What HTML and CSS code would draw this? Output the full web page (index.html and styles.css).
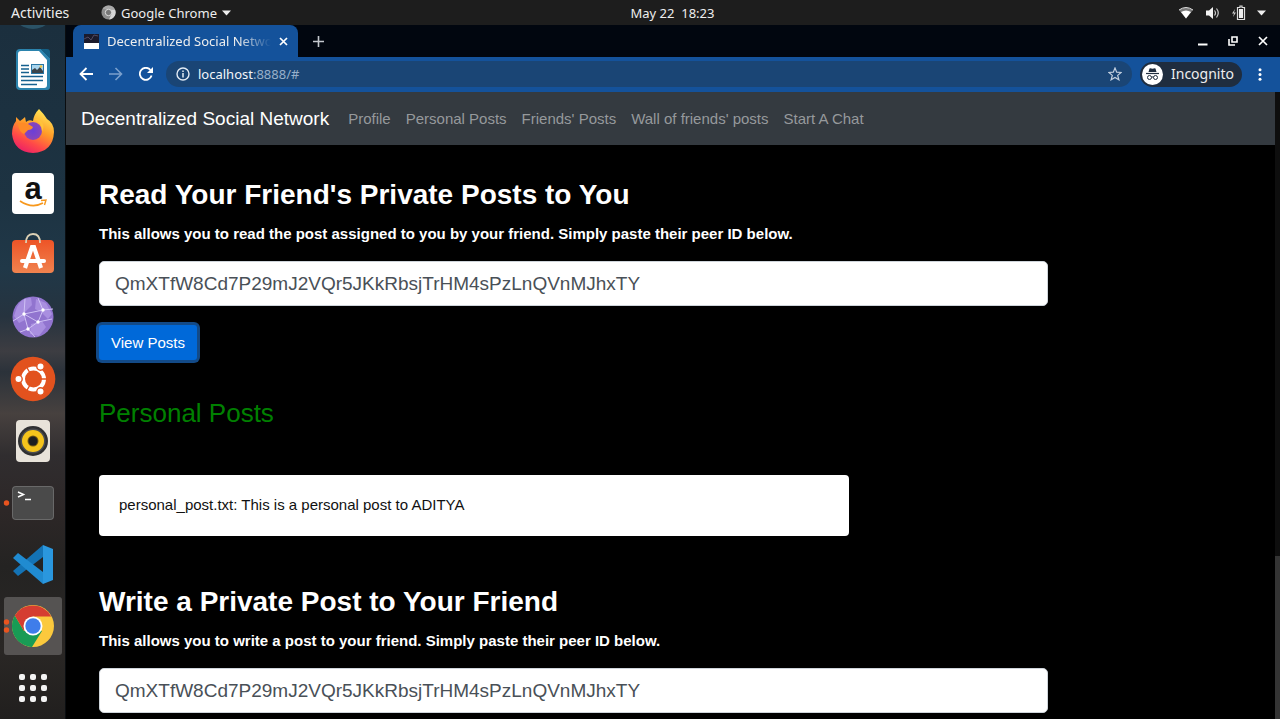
FILE: index.html
```html
<!DOCTYPE html>
<html lang="en">
<head>
<meta charset="utf-8">
<title>Decentralized Social Network</title>
<link rel="stylesheet" href="styles.css">
</head>
<body>
<div class="desktop">
  <header class="topbar">
    <button class="top-btn activities" type="button">Activities</button>
    <button class="top-btn app-menu" type="button">
      <svg width="15" height="15" viewBox="0 0 15 15"><circle cx="7.500" cy="7.500" r="7" fill="#8d8d8d"/><path d="M7.500 4.500H14A7 7 0 0 1 8 14.500L10.500 9Z" fill="#d5d5d5"/><path d="M1.500 4A7 7 0 0 1 14 4.500H7.500Z" fill="#a9a9a9"/><circle cx="7.500" cy="7.500" r="3.200" fill="#777" stroke="#ddd" stroke-width="1"/></svg>
      <span>Google Chrome</span>
      <svg width="9" height="6" viewBox="0 0 9 6"><path d="M0 0.500H9L4.500 5.500Z" fill="#eee"/></svg>
    </button>
    <time class="clock">May 22&nbsp; 18:23</time>
    <div class="tray">
      <svg width="16" height="14" viewBox="0 0 16 14"><path d="M1 4Q8 -1 15 4L8 12.500Z" fill="#777"/><path d="M3 6Q8 3 13 6L8 12.500Z" fill="#fff"/><path d="M1 4Q8 -1 15 4" fill="none" stroke="#ddd" stroke-width="1"/></svg>
      <svg width="15" height="14" viewBox="0 0 15 14"><path d="M1 4.500H4L8 1V13L4 9.500H1Z" fill="#f2f2f2"/><path d="M9.500 4.500Q11.500 7 9.500 9.500M11.500 2.500Q15 7 11.500 11.500" fill="none" stroke="#ccc" stroke-width="1.200"/></svg>
      <svg width="15" height="16" viewBox="0 0 15 16"><path d="M4 4L1 8.500H3L2 12L5 7.500H3Z" fill="#ccc"/><path d="M6.500 2.500H9V1H11V2.500H13.500V14.500H6.500Z" fill="none" stroke="#ddd" stroke-width="1.200"/><path d="M8 4H12V13H8Z" fill="#eee"/></svg>
      <svg width="9" height="6" viewBox="0 0 9 6"><path d="M0 0.500H9L4.500 5.500Z" fill="#eee"/></svg>
    </div>
  </header>

  <nav class="launcher" aria-label="Launcher">
    <a class="dock" href="#" aria-label="Mail"><svg viewBox="0 0 66 62"><circle cx="33" cy="32" r="22" fill="#2b5266"/></svg></a>
    <a class="dock" href="#" aria-label="Writer"><svg viewBox="0 0 66 62">
      <path d="M20 12H41L50 21V50Q50 53 47 53H20Q16 53 16 49V16Q16 12 20 12Z" fill="#2b83ad"/><path d="M41 12H47Q50 12 50 15V21Z" fill="#135f85"/><path d="M21 14H39L47 23V48Q47 51 44 51H21Q18 51 18 48V17Q18 14 21 14Z" fill="#fff"/>
      <path d="M21 28.500H29M21 32H29M21 35.500H29M21 39.500H43M21 43.500H43M21 47.500H37" stroke="#15618f" stroke-width="1.500"/><path d="M31 27H44V37H31Z" fill="#2a76a4"/><path d="M32 28H43V36H32Z" fill="#a9d5ee"/><path d="M32 36V33L35 31L37 33L40 30L43 34V36Z" fill="#3b444a"/><circle cx="41" cy="29.500" r="1.300" fill="#f8c63c"/></svg></a>
    <a class="dock" href="#" aria-label="Firefox"><svg viewBox="0 0 66 62">
      <defs><linearGradient id="fx" x1=".8" y1="0" x2=".3" y2="1"><stop offset="0" stop-color="#fff05a"/><stop offset=".45" stop-color="#ff9a27"/><stop offset=".75" stop-color="#ff4a48"/><stop offset="1" stop-color="#ec2067"/></linearGradient><radialGradient id="fp"><stop offset="0" stop-color="#6a3fd8"/><stop offset="1" stop-color="#8a45b8"/></radialGradient></defs>
      <path d="M39 10Q44 15 47 20Q54 24 54 33Q53 53 33 54Q14 53 12 35Q12 27 16 22V18L20 22Q23 20 25 18L26 23Q29 20 33 22Q34 15 39 10Z" fill="url(#fx)"/><circle cx="33" cy="32" r="9" fill="url(#fp)"/><path d="M18 25Q24 22 28 25L33 28Q32 31 28 31L24 35Q19 33 18 25Z" fill="#ff8b27"/><path d="M34 20Q42 23 42 33Q46 25 39 20Z" fill="#ffc23a"/></svg></a>
    <a class="dock" href="#" aria-label="Amazon"><svg viewBox="0 0 66 62"><rect x="12" y="12" width="42" height="41" rx="4" fill="#fff"/><text class="amazon" x="33" y="38" text-anchor="middle">a</text><path d="M20 40Q32 48 43 42" fill="none" stroke="#f7981d" stroke-width="1.600"/><path d="M41 39.500L46 39L44.500 44" fill="none" stroke="#f7981d" stroke-width="1.400"/></svg></a>
    <a class="dock" href="#" aria-label="Software"><svg viewBox="0 0 66 62"><defs><linearGradient id="sw" x2="0" y2="1"><stop stop-color="#ed5427"/><stop offset="1" stop-color="#f0834f"/></linearGradient></defs><rect x="12" y="17" width="42" height="33" rx="4" fill="url(#sw)"/><path d="M26 20Q26 11 33 11Q40 11 40 20" fill="none" stroke="#ddd1b5" stroke-width="1.800"/><path d="M25 45L32 24H34L41 45" fill="none" stroke="#fff" stroke-width="4.200"/><path d="M22 38H44" stroke="#fff" stroke-width="4" stroke-linecap="round"/></svg></a>
    <a class="dock" href="#" aria-label="Browser"><svg viewBox="0 0 66 62"><circle cx="33" cy="32" r="20.500" fill="#9174cf"/><path d="M17 22Q22 12 31 13L32 20L24 28L25 35L19 38L14 31ZM36 14L46 18L52 29L48 34L41 27L35 24ZM31 39L42 36L46 42L39 51L30 49Z" fill="#a98fe0"/><path d="M13 36L24 29L38 37L43 25L53 24M24 29L28 44L38 37L52 34M24 29L43 25L38 13M28 44L20 47M24 29L25 14M28 44L35 52" fill="none" stroke="#cfc1f4" stroke-width="1"/><g fill="#fff"><circle cx="24" cy="29" r="1.700"/><circle cx="43" cy="25" r="1.700"/><circle cx="38" cy="37" r="1.700"/><circle cx="28" cy="44" r="1.700"/></g></svg></a>
    <a class="dock" href="#" aria-label="Ubuntu"><svg viewBox="0 0 66 62"><circle cx="33" cy="32" r="22.300" fill="#e2521e"/><circle cx="33.500" cy="32" r="10.500" fill="none" stroke="#fff" stroke-width="4"/><path d="M41 32H48M30 26L26 19M30 38L26 45" stroke="#e2521e" stroke-width="1.400"/><g fill="#fff" stroke="#e2521e" stroke-width="1.400"><circle cx="18.500" cy="32" r="3.700"/><circle cx="40.500" cy="19.500" r="3.700"/><circle cx="40.500" cy="44.500" r="3.700"/></g></svg></a>
    <a class="dock" href="#" aria-label="Rhythmbox"><svg viewBox="0 0 66 62"><rect x="16" y="11" width="34" height="42" rx="4" fill="#e8e3da"/><circle cx="33" cy="32" r="15" fill="#2f3032"/><circle cx="33" cy="32" r="12.500" fill="#4b4d50"/><circle cx="33" cy="32" r="11" fill="#f5c41c"/><circle cx="33" cy="32" r="5.500" fill="#745a12"/><circle cx="33" cy="32" r="4.500" fill="#1d1e20"/></svg></a>
    <a class="dock" href="#" aria-label="Terminal"><svg viewBox="0 0 66 62"><circle cx="6.500" cy="32" r="2.700" fill="#e9541f"/><rect x="12" y="15" width="42" height="34" rx="4" fill="#696969"/><rect x="13" y="16" width="40" height="32" rx="3" fill="#4a4a4a"/><path d="M18 21L23.500 23.500L18 26M25 28.500H31" fill="none" stroke="#fff" stroke-width="1.500"/></svg></a>
    <a class="dock" href="#" aria-label="Visual Studio Code"><svg viewBox="0 0 66 62"><path d="M43 24V12L13 38L18 43Z" fill="#1473b5"/><path d="M13 25L18 20L43 39V51Z" fill="#208bd1"/><path d="M43 12L53 16V47L43 51Z" fill="#2a97de"/></svg></a>
    <a class="dock active" href="#" aria-label="Google Chrome"><svg viewBox="0 0 66 62"><rect x="4" y="2" width="58" height="58" rx="3" fill="#5e5c5a" fill-opacity=".85"/><circle cx="6.500" cy="27" r="2.700" fill="#e9541f"/><circle cx="6.500" cy="35" r="2.700" fill="#e9541f"/><circle cx="33" cy="31" r="21" fill="#fbc93d"/><path d="M14.800 20.500A21 21 0 0 0 32 52L42 36L33 31L24 36Z" fill="#199b55"/><path d="M14.800 20.500A21 21 0 0 1 51.200 21.500H33L24 36Z" fill="#d53d31"/><circle cx="33" cy="31" r="9.500" fill="#fff"/><circle cx="33" cy="31" r="7.700" fill="#3f7dea"/></svg></a>
    <a class="dock" href="#" aria-label="Show Applications"><svg viewBox="0 0 66 62"><g fill="#f3f3f3"><rect x="19" y="17" width="6" height="6" rx="2"/><rect x="30" y="17" width="6" height="6" rx="2"/><rect x="41" y="17" width="6" height="6" rx="2"/><rect x="19" y="28" width="6" height="6" rx="2"/><rect x="30" y="28" width="6" height="6" rx="2"/><rect x="41" y="28" width="6" height="6" rx="2"/><rect x="19" y="39" width="6" height="6" rx="2"/><rect x="30" y="39" width="6" height="6" rx="2"/><rect x="41" y="39" width="6" height="6" rx="2"/></g></svg></a>
  </nav>

  <div class="browser">
    <div class="tabstrip">
      <div class="tab">
        <svg width="15" height="15" viewBox="0 0 15 15"><path d="M0 0H15V9H0Z" fill="#1b1a2c"/><path d="M0 5L4 3L7 6L10 1L14 2" fill="none" stroke="#504a62"/><path d="M0 9H15V15H0Z" fill="#fff"/></svg>
        <span class="tab-title">Decentralized Social Network</span>
        <button class="icon-btn" type="button" aria-label="Close tab"><svg width="9" height="9" viewBox="0 0 9 9"><path d="M1 1L8 8M8 1L1 8" stroke="#fff" stroke-width="1.700"/></svg></button>
      </div>
      <button class="icon-btn" type="button" aria-label="New tab"><svg width="11" height="11" viewBox="0 0 11 11"><path d="M5.500 0V11M0 5.500H11" stroke="#c4c8ce" stroke-width="1.600"/></svg></button>
      <div class="window-controls">
        <button class="icon-btn" type="button" aria-label="Minimize"><svg width="10" height="10" viewBox="0 0 10 10"><path d="M0 8.500H9.500" stroke="#fff" stroke-width="2"/></svg></button>
        <button class="icon-btn" type="button" aria-label="Restore"><svg width="10" height="10" viewBox="0 0 10 10"><path d="M4 1H9V6H4Z" fill="none" stroke="#fff" stroke-width="1.600"/><path d="M1 3V9H7" fill="none" stroke="#fff" stroke-width="1.600"/></svg></button>
        <button class="icon-btn" type="button" aria-label="Close"><svg width="10" height="10" viewBox="0 0 10 10"><path d="M1 1L9 9M9 1L1 9" stroke="#fff" stroke-width="1.700"/></svg></button>
      </div>
    </div>

    <div class="toolbar">
      <button class="icon-btn" type="button" aria-label="Back"><svg width="14" height="14" viewBox="0 0 14 14"><path d="M14 7H2M7.500 1L1.500 7L7.500 13" fill="none" stroke="#fff" stroke-width="1.800"/></svg></button>
      <button class="icon-btn" type="button" aria-label="Forward"><svg width="14" height="14" viewBox="0 0 14 14"><path d="M0 7H12M6.500 1L12.500 7L6.500 13" fill="none" stroke="#7ba0cd" stroke-width="1.600"/></svg></button>
      <button class="icon-btn" type="button" aria-label="Reload"><svg width="14" height="14" viewBox="0 0 14 14"><path d="M12.600 8.500A6 6 0 1 1 11.500 3" fill="none" stroke="#fff" stroke-width="1.800"/><path d="M14 0V6H8Z" fill="#fff"/></svg></button>
      <div class="omnibox">
        <svg width="14" height="14" viewBox="0 0 14 14"><circle cx="7" cy="7" r="6" fill="none" stroke="#e3ebf4" stroke-width="1.400"/><path d="M7 6V10.500M7 3.500V5" stroke="#e3ebf4" stroke-width="1.500"/></svg>
        <span class="url">localhost<span class="url-rest">:8888/#</span></span>
        <button class="icon-btn" type="button" aria-label="Bookmark"><svg width="14" height="14" viewBox="0 0 14 14"><path d="M7 1L8.700 5.200L13.200 5.500L9.700 8.400L10.900 12.800L7 10.400L3.100 12.800L4.300 8.400L0.800 5.500L5.300 5.200Z" fill="none" stroke="#c3d0df" stroke-width="1.200"/></svg></button>
      </div>
      <div class="incognito">
        <svg width="21" height="21" viewBox="0 0 21 21"><circle cx="10.500" cy="10.500" r="10.500" fill="#fff"/><path d="M6.500 8L7.500 4.500Q8 4 10.500 4.800Q13 4 13.500 4.500L14.500 8Z" fill="#1f2d3f"/><path d="M4 9.500H17" stroke="#1f2d3f" stroke-width="1.200"/><g fill="none" stroke="#1f2d3f"><circle cx="7.500" cy="13.500" r="2"/><circle cx="13.500" cy="13.500" r="2"/><path d="M9.500 13H11.500"/></g></svg>
        <span>Incognito</span>
      </div>
      <button class="icon-btn" type="button" aria-label="Menu"><svg width="4" height="13" viewBox="0 0 4 13"><g fill="#fff"><circle cx="2" cy="1.800" r="1.500"/><circle cx="2" cy="6.500" r="1.500"/><circle cx="2" cy="11.200" r="1.500"/></g></svg></button>
    </div>

    <div class="viewport">
      <div class="page">
        <nav class="navbar">
          <a class="brand" href="#">Decentralized Social Network</a>
          <a class="nav-link" href="#">Profile</a>
          <a class="nav-link" href="#">Personal Posts</a>
          <a class="nav-link" href="#">Friends' Posts</a>
          <a class="nav-link" href="#">Wall of friends' posts</a>
          <a class="nav-link" href="#">Start A Chat</a>
        </nav>
        <main class="content">
          <section class="section">
            <h2 class="title">Read Your Friend's Private Posts to You</h2>
            <label class="hint" for="read-peer">This allows you to read the post assigned to you by your friend. Simply paste their peer ID below.</label>
            <input class="field" id="read-peer" type="text" value="QmXTfW8Cd7P29mJ2VQr5JKkRbsjTrHM4sPzLnQVnMJhxTY">
            <button class="btn" type="button">View Posts</button>
          </section>
          <section class="results">
            <h3 class="subtitle">Personal Posts</h3>
            <p class="post">personal_post.txt: This is a personal post to ADITYA</p>
          </section>
          <section class="section">
            <h2 class="title">Write a Private Post to Your Friend</h2>
            <label class="hint" for="write-peer">This allows you to write a post to your friend. Simply paste their peer ID below.</label>
            <input class="field" id="write-peer" type="text" value="QmXTfW8Cd7P29mJ2VQr5JKkRbsjTrHM4sPzLnQVnMJhxTY">
          </section>
        </main>
      </div>
      <div class="scrollbar"><div class="thumb"></div></div>
    </div>
  </div>
</div>
</body>
</html>
```
FILE: styles.css
```css
* { box-sizing: border-box; }
body { margin: 0; background: #000; }
button { border: 0; background: none; padding: 0; font: inherit; color: inherit; }
a { text-decoration: none; color: inherit; }
svg { display: block; flex: none; }

.desktop {
  display: grid;
  grid-template: 25px minmax(0, 1fr) / 66px minmax(0, 1fr);
  height: 100vh;
  overflow: hidden;
  font: 13px/18px "Noto Sans", sans-serif;
  color: #eee;
}

/* system bar */
.topbar {
  grid-column: 1 / -1;
  display: grid;
  grid-template-columns: 90px 1fr auto 1fr 22px;
  align-items: center;
  padding: 0 14px 0 11px;
  background: #1d1d1d;
}
.top-btn { justify-self: start; }
.activities { font-size: 14px; }
.app-menu { display: flex; align-items: center; gap: 5px; }
.clock { white-space: nowrap; }
.tray { grid-column: 4 / 6; justify-self: end; display: flex; align-items: center; gap: 11px; }

/* launcher */
.launcher {
  display: flex;
  flex-direction: column;
  justify-content: flex-end;
  overflow: hidden;
  border-right: 1px solid #0a0d10;
  background: linear-gradient(#1b2f3e, #1d3342 25%, #203848 35%, #26333f 42%, #3d3d42 47%, #2b323a 50%, #47413f 56%, #302d2f 62%, #2d2727 70%, #242322 78%, #2a2725 90%, #211f1e);
}
.dock { flex: none; height: 62px; }
.dock svg { width: 66px; height: 62px; }
.amazon { font: bold 31px "Liberation Sans", Arial, sans-serif; fill: #111; }

/* browser chrome */
.browser { display: flex; flex-direction: column; min-width: 0; background: #000; }
.icon-btn { display: flex; flex: none; }
.tabstrip { display: flex; align-items: flex-end; gap: 15px; height: 32px; padding: 0 12px 0 7px; background: #01060f; }
.tabstrip > .icon-btn, .window-controls { height: 32px; align-items: center; }
.tab {
  display: flex;
  align-items: center;
  gap: 8px;
  width: 225px;
  height: 32px;
  padding: 0 10px 0 11px;
  border-radius: 8px 8px 0 0;
  background: #14529b;
}
.tab-title {
  flex: 1;
  overflow: hidden;
  white-space: nowrap;
  -webkit-mask-image: linear-gradient(90deg, #000 80%, transparent);
  mask-image: linear-gradient(90deg, #000 80%, transparent);
}
.window-controls { display: flex; gap: 20px; margin-left: auto; }
.toolbar { display: flex; align-items: center; gap: 16px; height: 35px; padding: 0 18px 1px 13px; background: #14529b; }
.omnibox { display: flex; flex: 1; align-items: center; gap: 8px; height: 26px; padding: 0 10px; margin: 0 -8px 0 -3px; border-radius: 13px; background: #1a4575; }
.url { flex: 1; color: #f2f6fa; }
.url-rest { color: #98b0ca; }
.incognito { display: flex; align-items: center; gap: 8px; height: 25px; padding: 0 8px 0 2px; border-radius: 13px; background: #1f2d3f; font-size: 14px; }

/* page */
.viewport { display: flex; flex: 1; min-height: 0; overflow: hidden; font: 15px/22px "Liberation Sans", Arial, sans-serif; }
.page { flex: 1; min-width: 0; }
.scrollbar { display: flex; flex-direction: column; justify-content: flex-end; width: 5px; background: #0e0e0e; }
.thumb { height: 26%; background: #343434; }
.navbar { display: flex; align-items: center; gap: 15px; min-height: 53px; padding: 0 15px; background: #343a40; color: #96999c; }
.brand { margin-right: 4px; font-size: 19px; color: #fff; }
.content { padding: 33px 33px 32px; }
.section { display: flex; flex-direction: column; align-items: flex-start; }
.title { margin: 0; font-size: 28px; line-height: 34px; color: #fff; }
.hint { margin: 11px 0 16px; font-weight: bold; color: #fff; }
.field {
  width: 83%;
  height: 45px;
  padding: 0 15px;
  border: 1px solid #ced4da;
  border-radius: 5px;
  background: #fff;
  color: #495057;
  font: 19px/28px "Liberation Sans", Arial, sans-serif;
}
.btn {
  height: 35px;
  margin-top: 19px;
  padding: 0 12px;
  border-radius: 3px;
  background: #0069d9;
  box-shadow: 0 0 0 3px #134a87;
  color: #fff;
}
.results { margin: 37px 0 49px; }
.subtitle { margin: 0 0 46px; font-size: 26px; font-weight: normal; line-height: 32px; color: #008000; }
.post { width: 750px; max-width: 100%; margin: 0; padding: 19px 20px 20px; border-radius: 4px; background: #fff; color: #111; }
```
